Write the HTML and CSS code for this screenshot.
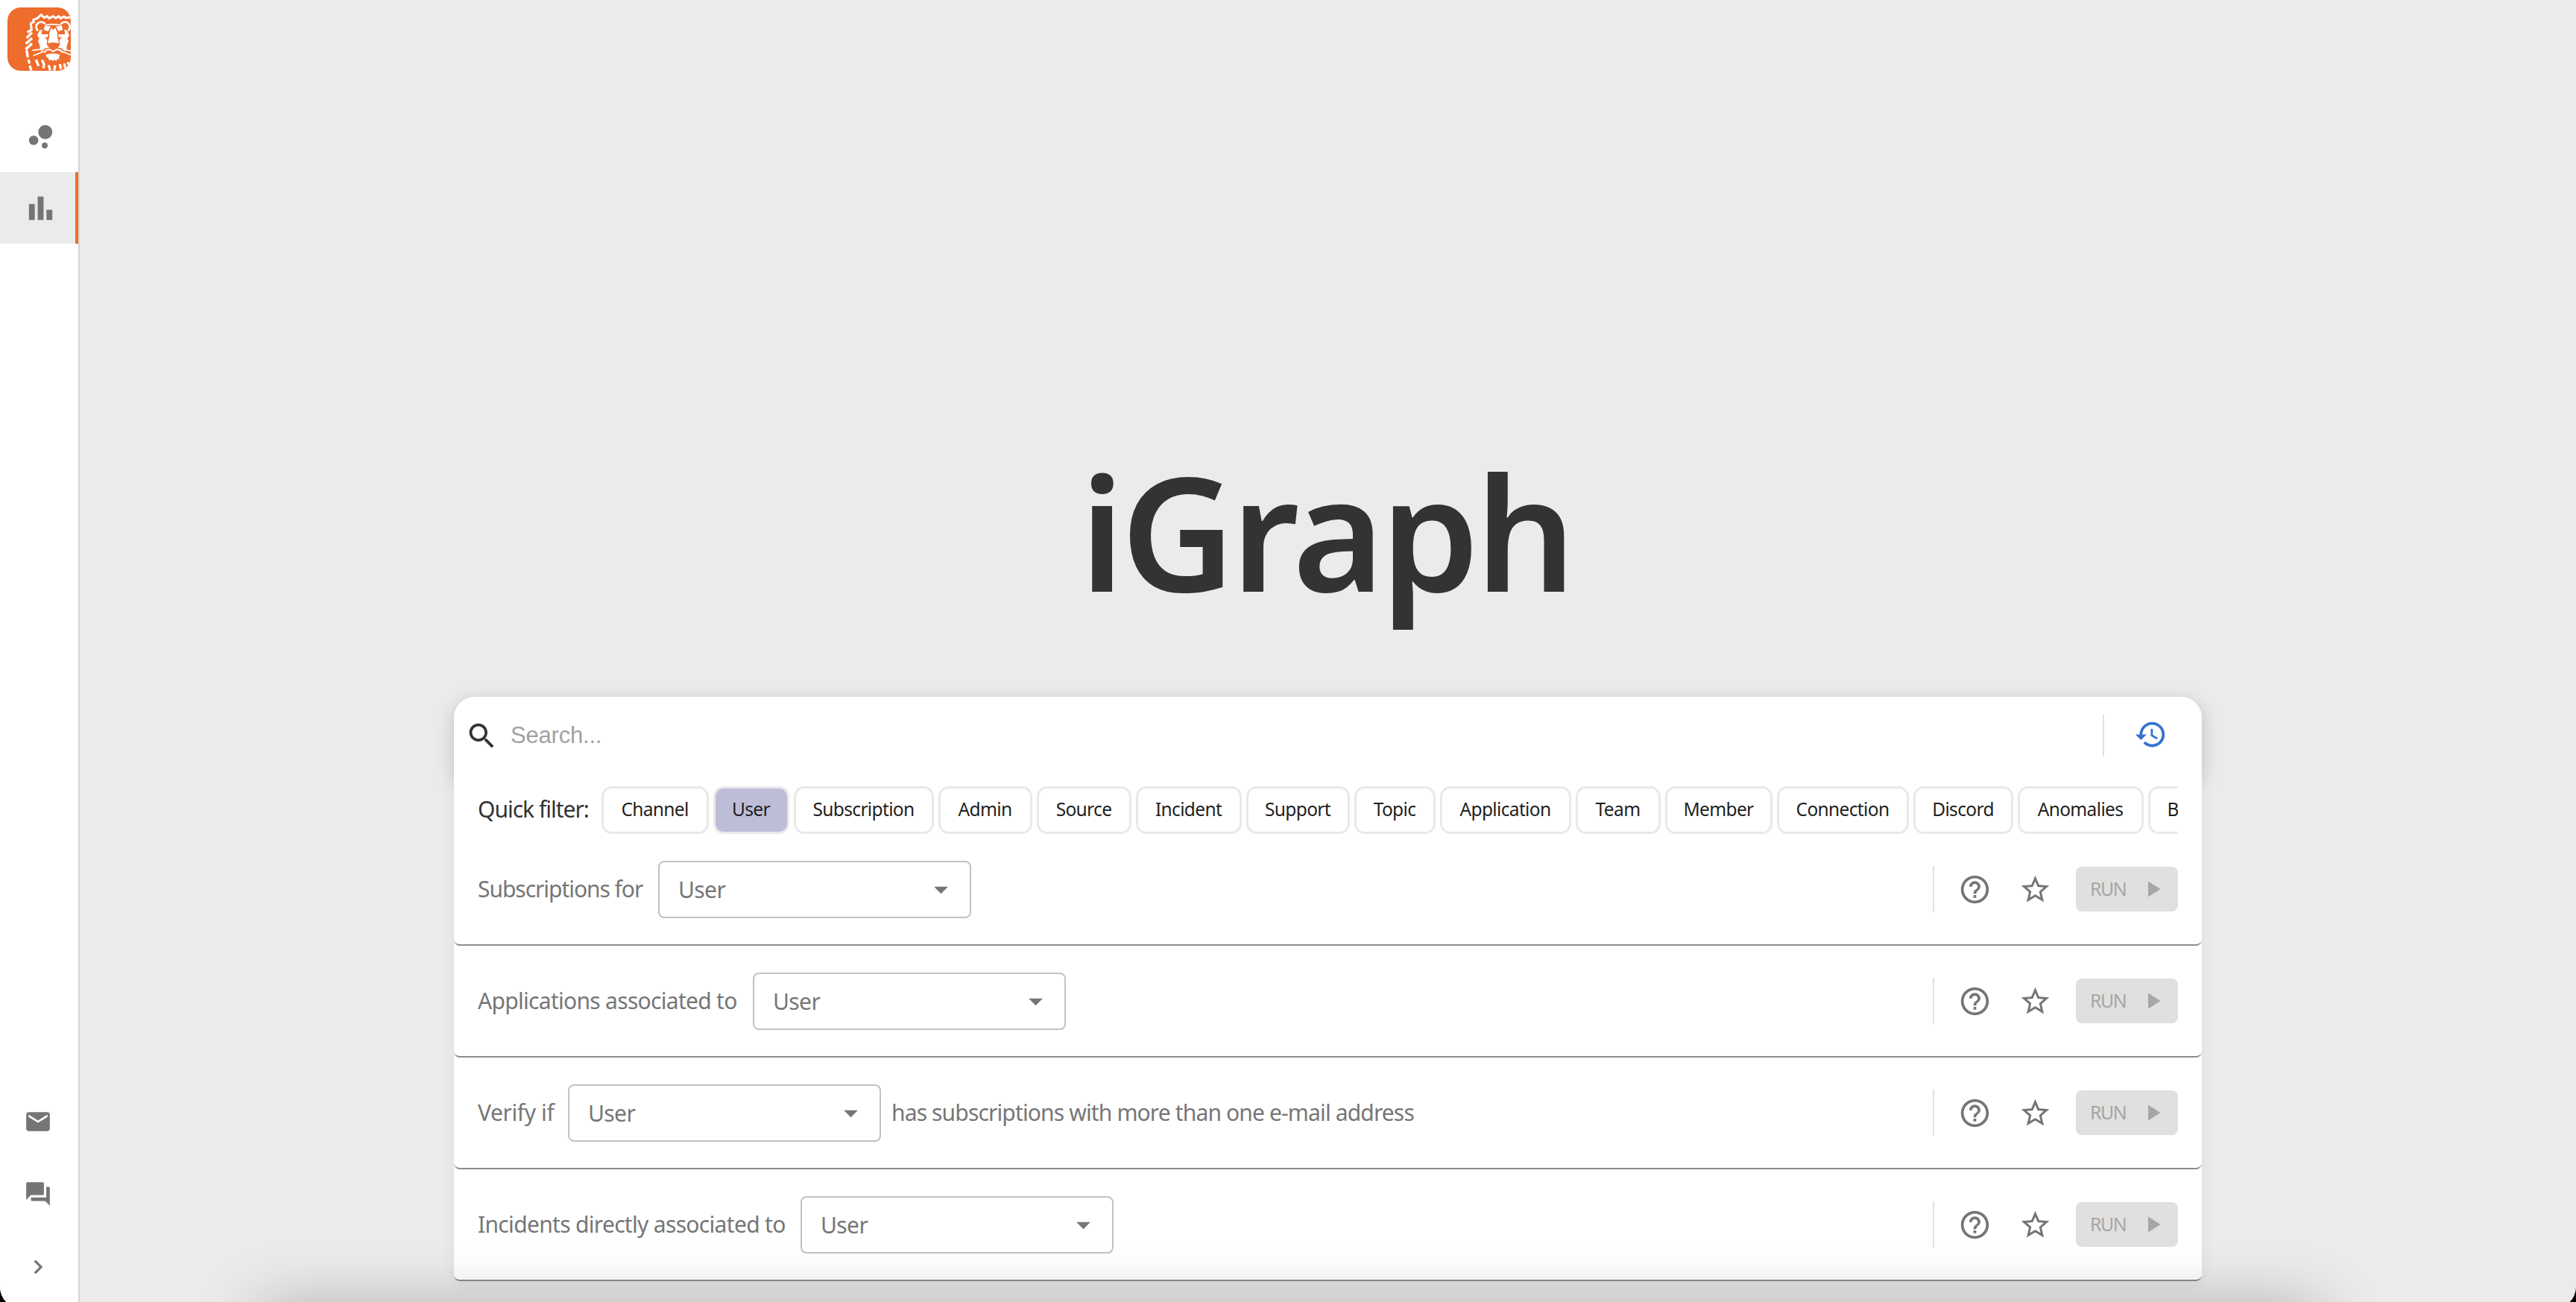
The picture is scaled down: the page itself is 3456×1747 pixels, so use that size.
FILE: index.html
```html
<!DOCTYPE html>
<html lang="en">
<head>
<meta charset="utf-8">
<title>iGraph</title>
<link rel="stylesheet" href="styles.css">
</head>
<body>
<svg class="defs" width="0" height="0" aria-hidden="true">
  <symbol id="help" viewBox="0 0 24 24"><path d="M11 18h2v-2h-2v2zm1-16C6.480 2 2 6.480 2 12s4.480 10 10 10 10-4.480 10-10S17.520 2 12 2zm0 18c-4.410 0-8-3.590-8-8s3.590-8 8-8 8 3.590 8 8-3.590 8-8 8zm0-14c-2.210 0-4 1.790-4 4h2c0-1.100.9-2 2-2s2 .9 2 2c0 2-3 1.750-3 5h2c0-2.250 3-2.500 3-5 0-2.210-1.790-4-4-4z"/></symbol>
  <symbol id="star" viewBox="0 0 24 24"><path d="m22 9.240-7.190-.62L12 2 9.190 8.630 2 9.240l5.460 4.730L5.820 21 12 17.270 18.180 21l-1.630-7.030L22 9.240zM12 15.400l-3.760 2.270 1-4.280-3.320-2.880 4.380-.38L12 6.100l1.710 4.040 4.380.38-3.320 2.880 1 4.280L12 15.400z"/></symbol>
  <symbol id="play" viewBox="0 0 24 24"><path d="M8 5v14l11-7z"/></symbol>
  <symbol id="caret" viewBox="0 0 24 24"><path d="m7 10 5 5 5-5z"/></symbol>
</svg>
<div class="window">
  <nav class="sidebar">
    <svg class="logo" viewBox="30 30 255 255">
      <g fill="none" stroke="#fff" stroke-linejoin="round">
        <path stroke-width="9" d="M127 118l-3-24 12-6-2-8 17-7 15-14 12 13 12-7 8 9 16-9 10 8 12-8 8 9 14-8 6 6 20-2"/>
        <path stroke-width="10" d="M110 130l20-12M107 153l22-22M104 176l25-22M103 199l26-24M107 202l5 30M114 240l5 16M120 264l6 20M145 240l10 26M169 241l10 22M174 262l3 13M196 262l6 21M222 263l-4 21M241 258l4 20M259 256l3 18M272 250l8 14"/>
        <path stroke-width="8" d="M153 124a20 20 0 1 1 29-27M274 124a20 20 0 1 0-29-27"/>
        <path stroke-width="5" d="M181 102q14-4 33-4t33 4M130 203l46-6M134 224l42-17M250 197l35 8M250 207l35 14"/>
        <path stroke-width="6" d="M178 212q5-12 22-13l14 8 14-8q18 2 24 13"/>
      </g>
      <path fill="#fff" d="M180 104l24 2-10 20-18-6zM249 104l-24 2 10 20 18-6zM206 112l8 8 9-8 8 20 0 14 6 28-23-3-22 3 7-28 0-14zM158 124l12-6-3 20h28l-3 12-12-1 10 12-2 18 10 12-16 4-16 12q-8-12-6-24l-7-18 5-10-8-12zM271 124l-12-6 3 20h-28l3 12 12-1-10 12 2 18-8 12 16 4 14 12q8-12 6-24l7-18-5-10 8-12zM184 220q30-10 58 0l-4 8v12l-8-4-2 9-10-4-6 4-8-4-7 2-2-10-7-2z"/>
    </svg>
    <a class="nav-item nav-first"><svg class="icon-wide" viewBox="0 0 24 24"><circle cx="7.200" cy="14.400" r="3.200"/><circle cx="14.800" cy="18" r="2"/><circle cx="15.200" cy="8.800" r="4.800"/></svg></a>
    <a class="nav-item active"><svg class="icon-wide" viewBox="0 0 24 24"><path d="M4 9h4v11H4zm12 4h4v7h-4zm-6-9h4v16h-4z"/></svg></a>
    <div class="nav-bottom">
      <svg viewBox="0 0 24 24"><path d="M20 4H4c-1.100 0-1.990.9-1.990 2L2 18c0 1.100.9 2 2 2h16c1.100 0 2-.9 2-2V6c0-1.100-.9-2-2-2zm0 4-8 5-8-5V6l8 5 8-5v2z"/></svg>
      <svg viewBox="0 0 24 24"><path d="M21 6h-2v9H6v2c0 .55.450 1 1 1h11l4 4V7c0-.55-.45-1-1-1zm-4 6V3c0-.55-.45-1-1-1H3c-.55 0-1 .450-1 1v14l4-4h10c.55 0 1-.45 1-1z"/></svg>
      <svg viewBox="0 0 24 24"><path d="M10 6 8.590 7.410 13.170 12l-4.580 4.590L10 18l6-6z"/></svg>
    </div>
  </nav>
  <main class="main">
    <h1 class="title">iGraph</h1>
    <section class="panel">
      <div class="search">
        <svg class="search-icon" viewBox="0 0 24 24"><path d="M15.500 14h-.79l-.28-.27C15.410 12.590 16 11.110 16 9.500 16 5.910 13.090 3 9.500 3S3 5.910 3 9.500 5.910 16 9.500 16c1.610 0 3.090-.59 4.230-1.570l.27.28v.79l5 4.990L20.490 19l-4.990-5zm-6 0C7.010 14 5 11.990 5 9.500S7.010 5 9.500 5 14 7.010 14 9.500 11.990 14 9.500 14z"/></svg>
        <span class="placeholder">Search...</span>
        <div class="history"><svg viewBox="0 0 24 24"><path d="M13 3c-4.970 0-9 4.030-9 9H1l3.890 3.890.07.14L9 12H6c0-3.870 3.130-7 7-7s7 3.130 7 7-3.130 7-7 7c-1.930 0-3.680-.79-4.940-2.060l-1.420 1.420C8.270 19.990 10.510 21 13 21c4.970 0 9-4.030 9-9s-4.030-9-9-9zm-1 5v5l4.280 2.540.72-1.210-3.500-2.080V8H12z"/></svg></div>
      </div>
      <div class="filters">
        <span class="filter-label">Quick filter:</span>
        <div class="chips">
          <span class="chip">Channel</span><span class="chip selected">User</span><span class="chip">Subscription</span><span class="chip">Admin</span><span class="chip">Source</span><span class="chip">Incident</span><span class="chip">Support</span><span class="chip">Topic</span><span class="chip">Application</span><span class="chip">Team</span><span class="chip">Member</span><span class="chip">Connection</span><span class="chip">Discord</span><span class="chip">Anomalies</span><span class="chip">B</span>
        </div>
      </div>
      <div class="row">
        <span class="label label-subs">Subscriptions for</span>
        <div class="select"><span>User</span><svg><use href="#caret"/></svg></div>
        <div class="actions"><svg><use href="#help"/></svg><svg><use href="#star"/></svg><div class="run"><span>RUN</span><svg><use href="#play"/></svg></div></div>
      </div>
      <div class="row">
        <span class="label label-apps">Applications associated to</span>
        <div class="select"><span>User</span><svg><use href="#caret"/></svg></div>
        <div class="actions"><svg><use href="#help"/></svg><svg><use href="#star"/></svg><div class="run"><span>RUN</span><svg><use href="#play"/></svg></div></div>
      </div>
      <div class="row">
        <span class="label label-verify">Verify if</span>
        <div class="select"><span>User</span><svg><use href="#caret"/></svg></div>
        <span class="suffix">has subscriptions with more than one e-mail address</span>
        <div class="actions"><svg><use href="#help"/></svg><svg><use href="#star"/></svg><div class="run"><span>RUN</span><svg><use href="#play"/></svg></div></div>
      </div>
      <div class="row">
        <span class="label label-incidents">Incidents directly associated to</span>
        <div class="select"><span>User</span><svg><use href="#caret"/></svg></div>
        <div class="actions"><svg><use href="#help"/></svg><svg><use href="#star"/></svg><div class="run"><span>RUN</span><svg><use href="#play"/></svg></div></div>
      </div>
    </section>
  </main>
  <div class="dock-shadow"></div>
</div>
</body>
</html>
```
FILE: styles.css
```css
* { box-sizing: border-box; }
html { background: #000; }
body {
  margin: 0;
  height: 1747px;
  overflow: hidden;
  background: #000;
  font-family: "Noto Sans", sans-serif;
}
.defs { display: block; height: 0; }
svg { display: block; flex: none; fill: currentColor; }

.window {
  position: relative;
  display: flex;
  height: 1755px;
  overflow: hidden;
  border-radius: 0 0 28px 28px;
  background: #ebebeb;
}

/* Sidebar */
.sidebar {
  display: flex;
  flex-direction: column;
  width: 107px;
  flex: none;
  padding-top: 10px;
  border-right: 2px solid #d6d6d6;
  background: #fff;
  color: #757575;
}
.logo {
  width: 85px;
  height: 85px;
  margin-left: 10px;
  border-radius: 18px;
  background: #ee6c2c;
}
.nav-item {
  display: flex;
  align-items: center;
  height: 96px;
  padding-left: 31px;
}
.nav-first { margin-top: 40px; }
.active {
  background: #ebebeb;
  border-right: 4px solid #ee6c2c;
}
.icon-wide { width: 47px; height: 47px; }
.nav-bottom {
  display: flex;
  flex-direction: column;
  gap: 59px;
  margin-top: auto;
  padding: 0 0 36px 32px;
}
.nav-bottom svg { width: 38px; height: 38px; }
.nav-bottom svg:last-child { margin-top: 1px; }

/* Main column */
.main {
  display: flex;
  flex: 1;
  flex-direction: column;
  align-items: center;
}
.title {
  margin: 562px 0 0 -5px;
  height: 373px;
  font-size: 211px;
  font-weight: 600;
  line-height: 300px;
  letter-spacing: -5px;
  color: #333;
}
.panel {
  width: 2345px;
  border-radius: 28px 28px 8px 8px;
  background: #fff;
  box-shadow: 0 4px 20px rgba(0, 0, 0, .06);
}
.search {
  display: flex;
  align-items: center;
  height: 104px;
  padding-left: 15px;
  border-radius: 28px 28px 0 0;
  background: #fff;
  box-shadow: 0 8px 26px rgba(30, 35, 50, .17);
}
.search-icon { width: 45px; height: 45px; color: #333; }
.placeholder {
  margin-left: 16px;
  font: 31px "Liberation Sans", Arial, sans-serif;
  letter-spacing: -.2px;
  color: #a2a2a2;
}
.history {
  display: flex;
  align-items: center;
  height: 56px;
  margin-left: auto;
  padding: 0 46px 3px 40px;
  border-left: 2px solid #e0e0e0;
  color: #3572d0;
}
.history svg { width: 45px; height: 45px; }

.filters {
  position: relative;
  display: flex;
  align-items: center;
  height: 80px;
  padding: 16px 32px 0 32px;
  background: #fff;
}
.filter-label {
  flex: none;
  width: 165.500px;
  padding-bottom: 4px;
  font-size: 30px;
  letter-spacing: -1px;
  white-space: nowrap;
  color: #333;
}
.chips {
  display: flex;
  flex: 1;
  gap: 6px;
  overflow: hidden;
}
.chip {
  flex: none;
  width: 144px;
  height: 64px;
  border: 3px solid #e9e9e9;
  border-radius: 14px;
  font-size: 24.500px;
  line-height: 56px;
  letter-spacing: -.65px;
  text-align: center;
  color: #1f1f1f;
}
.selected { background: #bdbdd7; }
.chip:nth-child(2) { width: 102px; }
.chip:nth-child(3) { width: 188px; }
.chip:nth-child(4) { width: 126px; }
.chip:nth-child(5) { width: 127px; }
.chip:nth-child(6) { width: 142px; }
.chip:nth-child(7) { width: 139px; }
.chip:nth-child(8) { width: 109px; }
.chip:nth-child(9) { width: 176px; }
.chip:nth-child(10) { width: 114px; }
.chip:nth-child(11) { width: 144px; }
.chip:nth-child(12) { width: 177px; }
.chip:nth-child(13) { width: 134px; }
.chip:nth-child(14) { width: 169px; }
.chip:nth-child(15) { padding-left: 23px; text-align: left; }

/* Query rows */
.row {
  position: relative;
  display: flex;
  align-items: center;
  height: 150px;
  padding: 0 32px 0 32px;
  border-radius: 8px;
  background: #fff;
  border-bottom: 2px solid #8c8c8c;
}
.label, .suffix {
  flex: none;
  padding-bottom: 2px;
  font-size: 30px;
  white-space: nowrap;
  color: #767676;
}
.label-subs { width: 242px; letter-spacing: -1.050px; }
.label-apps { width: 369px; letter-spacing: -.7px; }
.label-verify { width: 121px; letter-spacing: -.4px; }
.label-incidents { width: 433px; letter-spacing: -.68px; }
.suffix { margin-left: 14px; letter-spacing: -.86px; }
.select {
  display: flex;
  align-items: center;
  justify-content: space-between;
  flex: none;
  width: 420px;
  height: 77px;
  padding: 0 16px 0 25px;
  border: 2px solid #c2c2c2;
  border-radius: 8px;
  font-size: 30px;
  letter-spacing: -.6px;
  color: #767676;
}
.select svg { width: 45px; height: 45px; }
.actions {
  display: flex;
  align-items: center;
  height: 62px;
  margin-left: auto;
  padding-left: 32px;
  border-left: 2px solid #e0e0e0;
  color: #757575;
}
.actions > svg { width: 45px; height: 45px; margin-right: 36px; }
.run {
  display: flex;
  align-items: center;
  justify-content: space-between;
  width: 137px;
  height: 60px;
  margin-left: -4px;
  padding: 0 16px 0 19px;
  border-radius: 8px;
  background: #e0e0e0;
  font-size: 25px;
  letter-spacing: -1.500px;
  color: #a6a6a6;
}
.run span { padding-bottom: 3px; }
.run svg { width: 36px; height: 36px; }

/* Shade cast from just below the window's bottom edge */
.dock-shadow {
  position: absolute;
  top: 1757px;
  left: 350px;
  width: 2758px;
  height: 200px;
  box-shadow: 0 0 85px rgba(0, 0, 0, .3);
}
```
